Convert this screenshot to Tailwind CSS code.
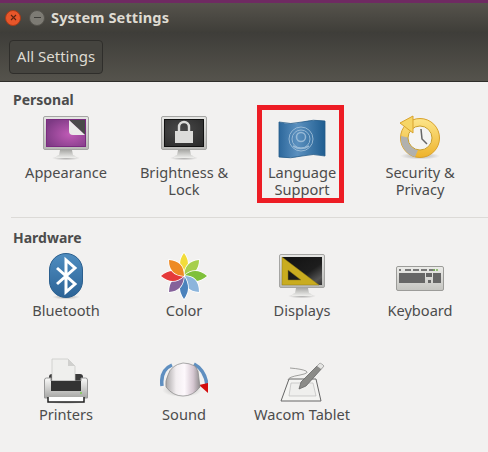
<!DOCTYPE html>
<html lang="en">
<head>
  <meta charset="UTF-8" />
  <title>System Settings</title>
  <script src="https://cdn.jsdelivr.net/npm/@tailwindcss/browser@4"></script>
</head>
<body class="relative w-[488px] h-[452px] overflow-hidden bg-[#f2f1f0] font-['Noto_Sans',sans-serif] text-[#4c4c4c]">
  <svg width="0" height="0" class="absolute">
    <defs>
      <linearGradient id="bezel" x1="0" y1="0" x2="0" y2="1"><stop offset="0" stop-color="#e6e6e4"/><stop offset="1" stop-color="#b9b9b6"/></linearGradient>
      <linearGradient id="standg" x1="0" y1="0" x2="0" y2="1"><stop offset="0" stop-color="#a9a9a6"/><stop offset="1" stop-color="#efefed"/></linearGradient>
      <radialGradient id="purple" cx="0.6" cy="0.55" r="0.7"><stop offset="0" stop-color="#c05bb6"/><stop offset="1" stop-color="#7d3a84"/></radialGradient>
      <radialGradient id="darkscreen" cx="0.4" cy="0.4" r="0.8"><stop offset="0" stop-color="#4a4a4a"/><stop offset="1" stop-color="#2b2b2b"/></radialGradient>
      <linearGradient id="flag" x1="0" y1="0" x2="1" y2="0"><stop offset="0" stop-color="#2d689c"/><stop offset="0.4" stop-color="#5b90bf"/><stop offset="1" stop-color="#1f5d90"/></linearGradient>
      <linearGradient id="gold" x1="0" y1="0" x2="0" y2="1"><stop offset="0" stop-color="#fce58a"/><stop offset="1" stop-color="#eeb32c"/></linearGradient>
      <linearGradient id="btblue" x1="0" y1="0" x2="0" y2="1"><stop offset="0" stop-color="#4f8dc0"/><stop offset="1" stop-color="#2c6396"/></linearGradient>
      <linearGradient id="dispscreen" x1="0" y1="0" x2="1" y2="1"><stop offset="0" stop-color="#111"/><stop offset="0.6" stop-color="#1d1d1d"/><stop offset="0.85" stop-color="#555"/><stop offset="1" stop-color="#333"/></linearGradient>
      <linearGradient id="kbbody" x1="0" y1="0" x2="0" y2="1"><stop offset="0" stop-color="#ecece9"/><stop offset="1" stop-color="#c4c4c0"/></linearGradient>
      <linearGradient id="printbody" x1="0" y1="0" x2="0" y2="1"><stop offset="0" stop-color="#fbfbfa"/><stop offset="1" stop-color="#a5a5a3"/></linearGradient>
      <linearGradient id="knob" x1="0" y1="0" x2="1" y2="0"><stop offset="0" stop-color="#a8a5a6"/><stop offset="0.3" stop-color="#f2eef0"/><stop offset="0.55" stop-color="#fdf8fc"/><stop offset="0.8" stop-color="#d6c8d2"/><stop offset="1" stop-color="#8f8b8d"/></linearGradient>
      <radialGradient id="shade" cx="0.5" cy="0.5" r="0.5"><stop offset="0" stop-color="#000" stop-opacity="0.3"/><stop offset="1" stop-color="#000" stop-opacity="0"/></radialGradient>
    </defs>
  </svg>

  <div class="h-[3px] bg-[#6f2a62]"></div>
  <header class="h-[29px] flex items-center bg-gradient-to-b from-[#56534c] to-[#3f3e39] pl-[5px]">
    <span class="w-[16px] h-[16px] rounded-full bg-[#e8562a] border border-[#a83a17] flex items-center justify-center">
      <svg width="7" height="7" viewBox="0 0 7 7"><path d="M1 1l5 5M6 1l-5 5" stroke="#5b2411" stroke-width="1.1"/></svg>
    </span>
    <span class="w-[16px] h-[16px] rounded-full bg-[#7d7b74] border border-[#55534d] ml-[8px] flex items-center justify-center">
      <span class="w-[7px] h-px bg-[#3e3d39]"></span>
    </span>
    <h1 class="ml-[6px] text-[14.6px] font-bold text-[#dfdbd2] leading-none tracking-[0.1px]">System Settings</h1>
  </header>
  <nav class="h-[50px] flex items-center pl-[9px] bg-gradient-to-b from-[#3e3d39] to-[#55534c] border-b border-[#2f2e2a]">
    <div class="w-[94px] h-[34px] flex items-center justify-center rounded-[4px] border border-[#2f2e2b] bg-[#45443f] text-[15px] text-[#dfdbd2]">All Settings</div>
  </nav>

  <main class="flex flex-col">
    <section class="h-[136px] pt-[9px] border-b border-[#dcdad7] ml-[11px]">
      <h2 class="ml-[2px] h-[18px] text-[14px] leading-[18px] font-bold">Personal</h2>
      <div class="-ml-[4px] mt-[5px] grid grid-cols-[118px_118px_118px_118px] text-[14.6px] leading-[17px] text-center">
        <div class="flex flex-col items-center">
          <svg width="48" height="48" viewBox="0 0 48 48">
            <ellipse cx="24" cy="44" rx="14" ry="2.5" fill="url(#shade)"/>
            <path d="M18 36h12l1 5q3 .5 3 3H14q0-2.500 3-3z" fill="url(#standg)"/>
            <rect x="1.500" y="2.500" width="45" height="33" rx="1.500" fill="url(#bezel)" stroke="#a5a5a3"/>
            <rect x="4" y="5" width="40" height="28" fill="#7b2a80"/>
            <rect x="5" y="6" width="38" height="26" fill="url(#purple)"/>
            <path d="M27 6h16v15z" fill="#4a4a4a"/>
            <path d="M27 6l16 15H31q-4 0-4-4z" fill="#ebebe9"/>
          </svg>
          <span class="mt-[2px]">Appearance</span>
        </div>
        <div class="flex flex-col items-center">
          <svg width="48" height="48" viewBox="0 0 48 48">
            <ellipse cx="24" cy="44" rx="14" ry="2.5" fill="url(#shade)"/>
            <path d="M18 36h12l1 5q3 .5 3 3H14q0-2.500 3-3z" fill="url(#standg)"/>
            <rect x="1.500" y="2.500" width="45" height="33" rx="1.500" fill="url(#bezel)" stroke="#a5a5a3"/>
            <rect x="4" y="5" width="40" height="28" fill="#111"/>
            <rect x="5" y="6" width="38" height="26" fill="url(#darkscreen)"/>
            <path d="M19 17v-4a5 5 0 0 1 10 0v4" fill="none" stroke="#dcdcda" stroke-width="2.400"/>
            <rect x="15" y="17" width="18" height="12" fill="#dcdcda"/>
          </svg>
          <span class="mt-[2px] w-[100px]">Brightness &amp; Lock</span>
        </div>
        <div class="flex flex-col items-center">
          <svg width="48" height="48" viewBox="0 0 48 48">
            <path d="M1 8q12 3 23 0t23-1v35q-12-3-23 0t-23 1z" fill="url(#flag)" stroke="#255a88" stroke-width=".8"/>
            <g fill="none" stroke="#a9c6de" opacity=".8">
              <circle cx="23" cy="25" r="12" stroke-width="1"/>
              <circle cx="23" cy="25" r="9" stroke-width="1"/>
              <circle cx="23" cy="23" r="4.500" stroke-width="1.500"/>
              <path d="M15 32q8 5 16 0" stroke-width="1.500"/>
            </g>
          </svg>
          <span class="mt-[2px] w-[100px]">Language Support</span>
        </div>
        <div class="flex flex-col items-center">
          <svg width="48" height="48" viewBox="0 0 48 48">
            <ellipse cx="24" cy="42" rx="20" ry="3.500" fill="url(#shade)"/>
            <circle cx="24" cy="24" r="19.500" fill="url(#gold)" stroke="#d9a22c"/>
            <path d="M5 22a19.500 19.500 0 0 0 14 21l4-9.500q-8-1-9-9.500z" fill="#b1b1ae"/>
            <circle cx="24" cy="24" r="12" fill="#f4f4f2" stroke="#c9a02f"/>
            <path d="M25 15l1 10 5 5" fill="none" stroke="#666" stroke-width="1.500"/>
            <path d="M4 9l13-7v17z" fill="#f6d566" stroke="#d9a22c"/>
          </svg>
          <span class="mt-[2px] w-[100px]">Security &amp; Privacy</span>
        </div>
      </div>
    </section>

    <section class="pt-[11px] ml-[11px]">
      <h2 class="ml-[2px] h-[18px] text-[14px] leading-[18px] font-bold">Hardware</h2>
      <div class="-ml-[4px] mt-[5px] grid grid-cols-[118px_118px_118px_118px] auto-rows-[104px] text-[14.6px] leading-[17px] text-center">
        <div class="flex flex-col items-center">
          <svg width="48" height="48" viewBox="0 0 48 48">
            <ellipse cx="24" cy="45" rx="14" ry="2.500" fill="url(#shade)"/>
            <rect x="7.500" y="1.500" width="33" height="44" rx="16.500" fill="url(#btblue)" stroke="#2b5f8e"/>
            <path d="M15 16l18 16-9 8V8l9 8-18 16" fill="none" stroke="#fff" stroke-width="3"/>
          </svg>
          <span class="mt-[2px]">Bluetooth</span>
        </div>
        <div class="flex flex-col items-center">
          <svg width="48" height="48" viewBox="0 0 48 48">
            <g stroke="#fff" stroke-width="1.500" paint-order="stroke">
              <path d="M24 24Q16 12 24 1q8 11 0 23z" fill="#f2dc3a"/>
              <path d="M24 24Q25 9 39 8q0 14-15 16z" fill="#a7cf4d"/>
              <path d="M24 24q11-10 23 0-12 10-23 0z" fill="#7fc03a"/>
              <path d="M24 24q15 0 15 16-15-1-15-16z" fill="#8cb5dc"/>
              <path d="M24 24q8 12 0 23-8-11 0-23z" fill="#4b82bc"/>
              <path d="M24 24q-1 15-15 16 0-15 15-16z" fill="#85629a"/>
              <path d="M24 24Q13 34 1 24q12-10 23 0z" fill="#e53a3a"/>
              <path d="M24 24Q9 23 9 8q15 1 15 16z" fill="#ee8a24"/>
            </g>
          </svg>
          <span class="mt-[2px]">Color</span>
        </div>
        <div class="flex flex-col items-center">
          <svg width="48" height="48" viewBox="0 0 48 48">
            <ellipse cx="24" cy="44" rx="14" ry="2.5" fill="url(#shade)"/>
            <path d="M18 36h12l1 5q3 .5 3 3H14q0-2.500 3-3z" fill="url(#standg)"/>
            <rect x="1.500" y="2.500" width="45" height="33" rx="1.500" fill="url(#bezel)" stroke="#a5a5a3"/>
            <rect x="4" y="5" width="40" height="28" fill="url(#dispscreen)"/>
            <path fill-rule="evenodd" d="M4 5l37 28H4zM10 18v10h13z" fill="#c9ac1f" stroke="#8f7a14" stroke-width=".5"/>
          </svg>
          <span class="mt-[2px]">Displays</span>
        </div>
        <div class="flex flex-col items-center">
          <svg width="48" height="48" viewBox="0 0 48 48">
            <rect x=".5" y="14.500" width="47" height="24" rx="1.500" fill="url(#kbbody)" stroke="#9c9c99"/>
            <path d="M3 18h2M9 18h6M17 18h6M25 18h6M33 18h6" stroke="#555" stroke-width="1.500"/>
            <path d="M37 18h6" stroke="#79b356" stroke-width="1.500" stroke-dasharray="2 1"/>
            <rect x="3" y="21" width="26" height="10" fill="#666"/>
            <rect x="30" y="21" width="6" height="4" fill="#666"/>
            <rect x="32" y="28" width="3" height="3" fill="#666"/>
            <rect x="37" y="21" width="8" height="10" fill="#666"/>
          </svg>
          <span class="mt-[2px]">Keyboard</span>
        </div>
        <div class="flex flex-col items-center">
          <svg width="48" height="48" viewBox="0 0 48 48">
            <ellipse cx="24" cy="46" rx="20" ry="2" fill="url(#shade)"/>
            <path d="M7 21q0-3 3-3h28q3 0 3 3v10H7z" fill="#3a3a3a"/>
            <path d="M10 3h16l7 7v16H10z" fill="#efefed" stroke="#c5c5c3" stroke-width=".7"/>
            <path d="M26 3l7 7h-7z" fill="#d0d0ce"/>
            <path d="M2.500 24q0-2 2-2H9v3h30v-3h4.500q2 0 2 2v18h-43z" fill="url(#printbody)" stroke="#999"/>
            <rect x="9" y="25" width="30" height="10" fill="#333"/>
            <rect x="38" y="36" width="2" height="2" fill="#8ac86a"/>
            <path d="M6 41v5h36v-5" fill="#fff" stroke="#222" stroke-width="1.500"/>
          </svg>
          <span class="mt-[2px]">Printers</span>
        </div>
        <div class="flex flex-col items-center">
          <svg width="48" height="48" viewBox="0 0 48 48">
            <path d="M2 30Q0 14 12 9M34 8q11 6 13 21" fill="none" stroke="#5f8fc0" stroke-width="3.500"/>
            <path d="M39 29l9-2v10z" fill="#d40d0d"/>
            <ellipse cx="22" cy="34" rx="20" ry="7" fill="url(#shade)"/>
            <path d="M6 31q-1-6 2-12 3-10 15-12 6 0 12 3l3 5 2 16q-7 9-17 9T6 31z" fill="url(#knob)" stroke="#888" stroke-width=".7"/>
          </svg>
          <span class="mt-[2px]">Sound</span>
        </div>
        <div class="flex flex-col items-center">
          <svg width="48" height="48" viewBox="0 0 48 48">
            <path d="M11 23h27l5 22H3z" fill="#f4f4f2" stroke="#666" stroke-width="1"/>
            <path d="M13 27h22l3 13H11z" fill="#efefed" stroke="#bbb" stroke-width=".7"/>
            <path d="M12 12q12 1 16 3t-6 4q-12 2-12 5" fill="none" stroke="#8a8a88" stroke-width=".8"/>
            <path d="M42 7l4 3-18 20-7 3 2-7z" fill="#8b8b88" stroke="#666" stroke-width=".8"/>
            <path d="M42 7l4 3-3 3-4-3z" fill="#e5e5e3"/>
          </svg>
          <span class="mt-[2px]">Wacom Tablet</span>
        </div>
      </div>
    </section>
  </main>

  <div class="absolute left-[257px] top-[105px] w-[87px] h-[98px] border-[5px] border-[#ed1c24]"></div>
</body>
</html>
